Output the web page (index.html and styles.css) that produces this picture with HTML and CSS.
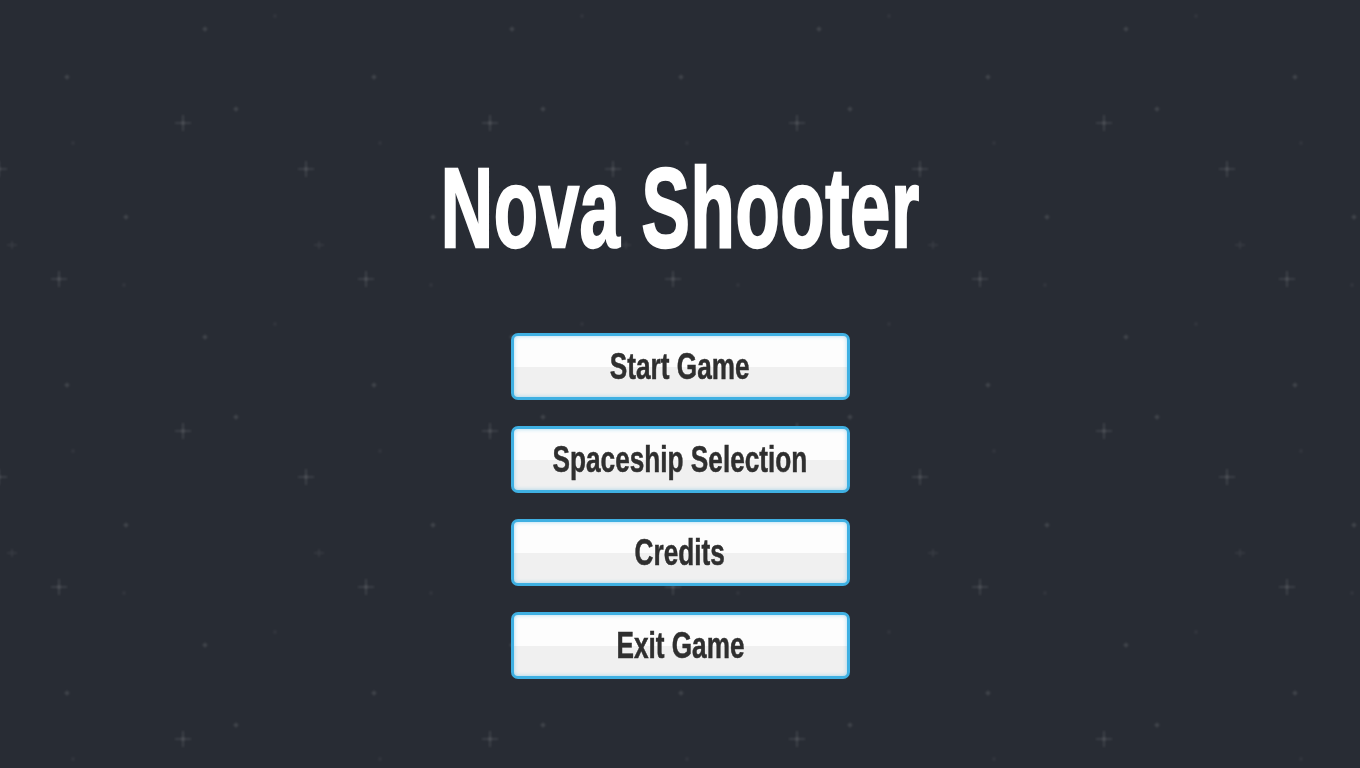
FILE: index.html
```html
<!DOCTYPE html>
<html lang="en">
<head>
<meta charset="utf-8">
<title>Nova Shooter</title>
<link rel="stylesheet" href="styles.css">
</head>
<body>
<svg class="starfield" width="100%" height="100%" aria-hidden="true">
  <defs>
    <filter id="soft" x="-50%" y="-50%" width="200%" height="200%">
      <feGaussianBlur stdDeviation="0.9"/>
    </filter>
    <g id="big" filter="url(#soft)">
      <path d="M-8 0H8M0 -8V8" stroke="#ffffff" stroke-opacity="0.13" stroke-width="1.6"/>
      <circle r="2" fill="#ffffff" fill-opacity="0.08"/>
    </g>
    <g id="small" filter="url(#soft)">
      <path d="M-5 0H5M0 -4V4" stroke="#ffffff" stroke-opacity="0.08" stroke-width="1.5"/>
    </g>
    <g id="dot" filter="url(#soft)">
      <path d="M-3 0H3M0 -3V3" stroke="#ffffff" stroke-opacity="0.07" stroke-width="1.5"/>
      <circle r="1.6" fill="#ffffff" fill-opacity="0.1"/>
    </g>
    <g id="faint" filter="url(#soft)">
      <circle r="2.2" fill="#ffffff" fill-opacity="0.045"/>
    </g>
    <pattern id="stars" width="307" height="308" patternUnits="userSpaceOnUse">
      <use href="#big" x="183" y="123"/>
      <use href="#big" x="59" y="279"/>
      <use href="#big" x="306" y="169"/>
      <use href="#big" x="-1" y="169"/>
      <use href="#small" x="12" y="245"/>
      <use href="#small" x="319" y="245"/>
      <use href="#dot" x="67" y="77"/>
      <use href="#dot" x="205" y="29"/>
      <use href="#dot" x="236" y="109"/>
      <use href="#dot" x="126" y="217"/>
      <use href="#faint" x="73" y="143"/>
      <use href="#faint" x="275" y="16"/>
      <use href="#faint" x="124" y="285"/>
    </pattern>
  </defs>
  <rect width="100%" height="100%" fill="url(#stars)"/>
</svg>

<main class="menu">
  <h1 class="title"><span class="title-text">Nova Shooter</span></h1>
  <nav class="buttons">
    <button class="menu-btn" type="button"><span class="btn-label">Start Game</span></button>
    <button class="menu-btn" type="button"><span class="btn-label">Spaceship Selection</span></button>
    <button class="menu-btn" type="button"><span class="btn-label">Credits</span></button>
    <button class="menu-btn" type="button"><span class="btn-label">Exit Game</span></button>
  </nav>
</main>
</body>
</html>
```

FILE: styles.css
```css
* {
  box-sizing: border-box;
}

html, body {
  margin: 0;
  height: 100%;
}

body {
  background: #282c34;
  font-family: "Liberation Sans Narrow", "Liberation Sans", Arial, sans-serif;
  overflow: hidden;
}

.starfield {
  position: fixed;
  inset: 0;
  z-index: 0;
}

.menu {
  position: relative;
  z-index: 1;
  display: flex;
  flex-direction: column;
  align-items: center;
  padding-top: 150px;
}

.title {
  margin: 0;
  height: 116px;
  font-size: 113px;
  line-height: 116px;
  font-weight: 700;
  color: #ffffff;
  white-space: nowrap;
}

.title-text {
  display: inline-block;
  transform: scaleX(0.642);
  letter-spacing: 1px;
  -webkit-text-stroke: 2.5px #ffffff;
}

.buttons {
  margin-top: 67px;
  display: flex;
  flex-direction: column;
  gap: 26px;
}

.menu-btn {
  width: 339px;
  height: 67px;
  border: 3px solid #3fb0e2;
  border-radius: 7px;
  background: linear-gradient(to bottom, #fdfdfd 0%, #fdfdfd 50%, #f0f0f0 50%, #f0f0f0 100%);
  box-shadow: inset 0 0 4px rgba(63, 176, 226, 0.45);
  display: flex;
  align-items: center;
  justify-content: center;
  padding: 0;
  font-family: inherit;
  font-size: 37px;
  line-height: 37px;
  font-weight: 700;
  color: #2f2f2f;
  cursor: pointer;
}

.btn-label {
  display: inline-block;
  transform: scaleX(0.708);
  -webkit-text-stroke: 0.5px #2f2f2f;
  white-space: nowrap;
}
```
